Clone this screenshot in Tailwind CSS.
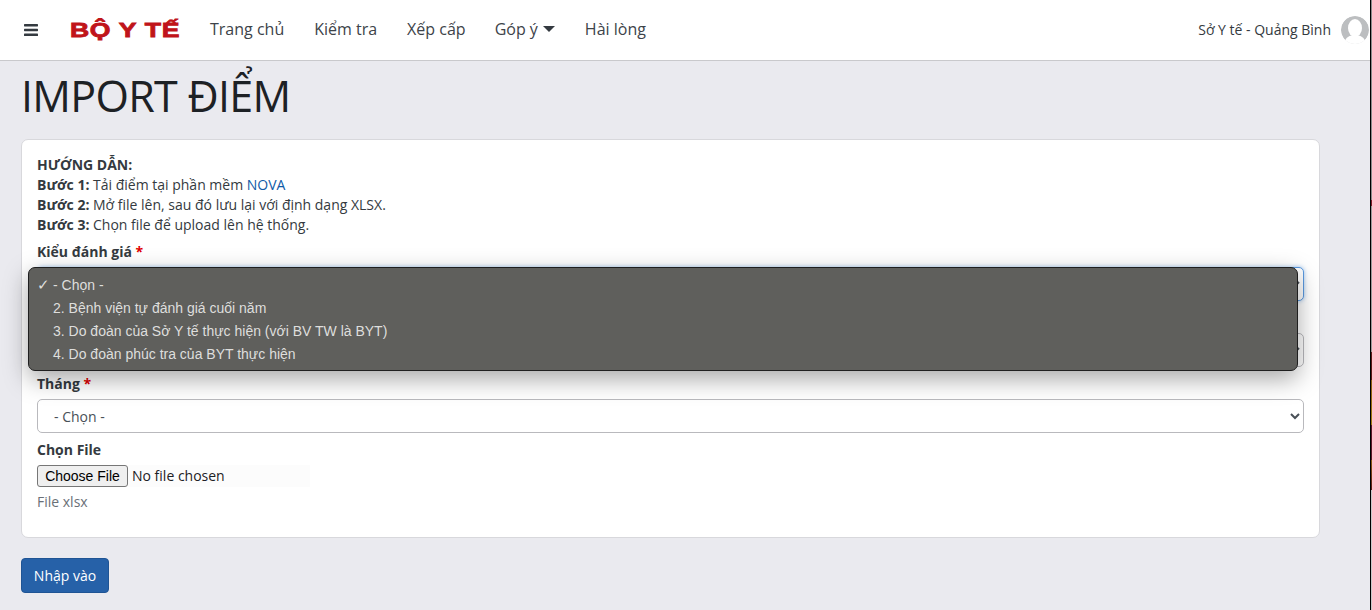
<!DOCTYPE html>
<html lang="vi">
<head>
  <meta charset="UTF-8" />
  <title>Import điểm</title>
  <script src="https://cdn.jsdelivr.net/npm/@tailwindcss/browser@4"></script>
</head>
<body class="bg-[#eaeaef] h-[610px] overflow-hidden relative font-['Open_Sans',sans-serif] text-[14px] text-[#343a40]">
  <!-- Thanh menu -->
  <nav class="h-[61px] bg-white border-b border-[#c9c9cc] flex items-center pr-[3px]">
    <svg class="ml-[24px] w-[14px] h-[12px]" viewBox="0 0 14 12" fill="#343a40"><rect width="14" height="2.4" y="0" rx="0.6"/><rect width="14" height="2.4" y="4.8" rx="0.6"/><rect width="14" height="2.4" y="9.6" rx="0.6"/></svg>
    <span class="ml-[32px] w-[110px] text-[20px] leading-none font-['Liberation_Sans',sans-serif] font-bold text-[#c0141a] tracking-[0.5px] [-webkit-text-stroke:0.8px_#c0141a] whitespace-nowrap origin-left scale-x-[1.33]">BỘ Y TẾ</span>
    <ul class="flex ml-[30px] mb-[2px] text-[16px] text-[#3d4349] gap-[30px] whitespace-nowrap">
      <li>Trang chủ</li>
      <li>Kiểm tra</li>
      <li>Xếp cấp</li>
      <li class="-ml-[1px] flex items-center gap-[5px]">Góp ý <span class="w-0 h-0 border-x-[6px] border-x-transparent border-t-[6px] border-t-[#343a40]"></span></li>
      <li>Hài lòng</li>
    </ul>
    <span class="ml-auto mr-[10px] mb-[2px] text-[14px] text-[#343a40]">Sở Y tế - Quảng Bình</span>
    <svg class="w-[28px] h-[28px] rounded-full" viewBox="0 0 28 28"><circle cx="14" cy="14" r="14" fill="#bcbec0"/><ellipse cx="14" cy="12" rx="7" ry="9" fill="#fff"/><path d="M3 28c1-7 6-9 11-9s10 2 11 9z" fill="#fff"/></svg>
  </nav>

  <main class="px-[21px]">
    <h1 class="text-[43px] leading-[54px] mt-[8px] text-[#1d2125] tracking-[-0.7px]">IMPORT ĐIỂM</h1>

    <div class="mt-[16px] w-[1299px] h-[399px] bg-white border border-[#d8d8dc] rounded-[7px] px-[15px] pt-[15px]">
      <div class="leading-[20px]">
        <p class="font-bold">HƯỚNG DẪN:</p>
        <p><b>Bước 1:</b> Tải điểm tại phần mềm <a class="text-[#0f5ba7]">NOVA</a></p>
        <p><b>Bước 2:</b> Mở file lên, sau đó lưu lại với định dạng XLSX.</p>
        <p><b>Bước 3:</b> Chọn file để upload lên hệ thống.</p>
      </div>

      <label class="block mt-[6px] font-bold leading-[21px]">Kiểu đánh giá <span class="text-[#e00000]">*</span></label>
      <select class="block mt-[5px] w-full h-[34px] bg-white border border-[#5b9ae0] rounded-[5px] shadow-[0_0_4px_#9cc4f0] pl-[12px] text-[#495057]"><option></option></select>

      <!-- nhãn của ô này bị danh sách thả xuống che khuất -->
      <select class="block mt-[32px] w-full h-[34px] bg-white border border-[#b9b9bd] rounded-[5px] pl-[12px] text-[#495057]"><option></option></select>

      <label class="block mt-[6px] font-bold leading-[21px]">Tháng <span class="text-[#e00000]">*</span></label>
      <select class="block mt-[5px] w-full h-[34px] bg-white border border-[#b9b9bd] rounded-[5px] pl-[12px] text-[#495057]"><option>- Chọn -</option></select>

      <label class="block mt-[6px] font-bold leading-[21px]">Chọn File</label>
      <input type="file" class="block mt-[5px] w-[273px] h-[22px] bg-[#fcfcfc] text-[#1d2125] file:h-[22px] file:w-[91px] file:mr-[4px] file:bg-[#efefef] file:border file:border-solid file:border-[#767676] file:rounded-[3px] file:text-black file:font-['Liberation_Sans',sans-serif]" />
      <p class="mt-[4px] text-[#6a7077] leading-[21px]">File xlsx</p>
    </div>

    <button class="mt-[20px] block w-[88px] h-[35px] bg-[#2661a8] border border-[#1f5494] rounded-[4px] text-white">Nhập vào</button>
  </main>

  <!-- Danh sách thả xuống -->
  <div class="absolute left-[28px] top-[267px] w-[1270px] h-[104px] bg-[#5f5f5c] border border-[#1f1f1f] rounded-[7px] shadow-[0_8px_24px_rgba(0,0,0,0.35)] pt-[6px] font-['Liberation_Sans',sans-serif] text-[14px] text-[#dededc]">
    <div class="h-[23px] flex items-center"><span class="w-[24px] pl-[8px] text-[15px]">✓</span>- Chọn -</div>
    <div class="h-[23px] flex items-center pl-[24px]">2. Bệnh viện tự đánh giá cuối năm</div>
    <div class="h-[23px] flex items-center pl-[24px]">3. Do đoàn của Sở Y tế thực hiện (với BV TW là BYT)</div>
    <div class="h-[23px] flex items-center pl-[24px]">4. Do đoàn phúc tra của BYT thực hiện</div>
  </div>

  <!-- Dải cạnh phải -->
  <div class="absolute right-0 top-0 w-[2px] h-[610px] border-l border-black bg-[linear-gradient(#8a8a8a_0,#8a8a8a_200px,#7d1a26_200px,#7d1a26_206px,#999_206px,#999_352px,#5c1a18_352px,#5c1a18_380px,#8a5a10_380px,#a07a10_425px,#5c1a28_425px,#5c1a28_460px,#8a5a10_460px,#5c1a18_490px,#c8c8c8_490px)]"></div>
</body>
</html>
